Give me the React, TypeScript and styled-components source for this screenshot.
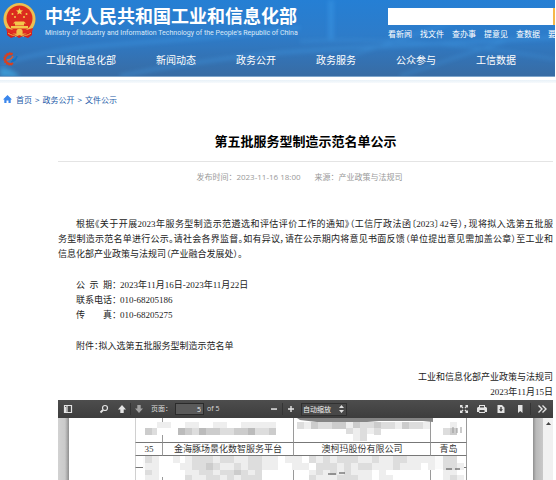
import React from 'react';
import styled, { createGlobalStyle } from 'styled-components';

const latin = '"Open Sans", "Noto Sans CJK SC", sans-serif';
const cjk = '"Noto Sans CJK SC", sans-serif';
const song = '"Liberation Serif", "Noto Sans CJK SC", serif';

const Global = createGlobalStyle`
  * { box-sizing: border-box; }
  body { margin: 0; background: #fff; font-family: ${cjk}; }
  a { color: inherit; text-decoration: none; }
  p, h1 { margin: 0; padding: 0; }
`;

const Page = styled.div`
  height: 100vh;
  display: flex;
  flex-direction: column;
  overflow: hidden;
`;

const Header = styled.header`
  position: relative;
  flex: none;
  margin-right: 1px;
  overflow: hidden;
  color: #fff;
  background: linear-gradient(#257fd4, #2d7cca 45%, #3472b3 78%, #386ca4);
  border-bottom: 1px solid #7fa6cc;
`;

const Backdrop = styled.svg`
  position: absolute;
  inset: 0;
  width: 100%;
  height: 100%;
`;

const Masthead = styled.div`
  position: relative;
  display: flex;
  align-items: flex-start;
  height: 42px;
  padding: 3px 0 0 3px;
`;

const Brand = styled.a`
  display: flex;
  gap: 9px;
  flex: 0 0 300px;
`;

const BrandText = styled.span`
  display: flex;
  flex-direction: column;
  white-space: nowrap;
`;

const BrandName = styled.span`
  font: 700 18px/25px ${cjk};
`;

const BrandLatin = styled.span`
  font: 400 7px/10px Roboto, sans-serif;
  color: #dbe9f7;
`;

const Search = styled.form`
  flex: 1;
  min-width: 0;
  margin: 5px 0 0 85px;
`;

const SearchBar = styled.div`
  display: flex;
  height: 17px;
`;

const SearchInput = styled.input`
  flex: 1;
  min-width: 0;
  border: 0;
  padding: 0 4px;
  background: #fff;
  font: 10px ${cjk};
`;

const SearchButton = styled.button`
  width: 2px;
  padding: 0;
  border: 0;
  background: #f5b84a;
`;

const QuickLinks = styled.div`
  display: flex;
  gap: 8px;
  font-size: 8px;
  line-height: 18px;
  white-space: nowrap;
`;

const Nav = styled.nav`
  position: relative;
  display: flex;
  align-items: center;
  gap: 40px;
  height: 34px;
  padding-left: 2px;
  font-size: 10px;
  white-space: nowrap;
`;

const NavLogo = styled.svg`
  flex: none;
  width: 16px;
  height: 14px;
  margin-right: -12px;
`;

const Band = styled.div`
  flex: none;
  height: 3px;
  margin-top: 3px;
  background: linear-gradient(#e8f1f8, #f7fafc);
`;

const Crumbs = styled.nav`
  flex: none;
  display: flex;
  align-items: center;
  gap: 3px;
  height: 32px;
  padding-left: 3px;
  color: #1a5aa8;
  font-size: 8px;
`;

const HomeIcon = styled.svg`
  width: 9px;
  height: 8px;
  margin-right: 1px;
`;

const Article = styled.article`
  flex: 1;
  min-height: 0;
  display: flex;
  flex-direction: column;
  padding: 16px 3px 0 58px;
`;

const Title = styled.h1`
  padding-bottom: 10px;
  border-bottom: 1px solid #e4e4e4;
  text-align: center;
  font: 700 13px/20px ${cjk};
  color: #000;
`;

const Meta = styled.p`
  display: flex;
  justify-content: center;
  gap: 14px;
  padding: 7px 12px 33px 0;
  font: 8px/15px ${latin};
  color: #999;
`;

const Body = styled.div`
  display: flex;
  flex-direction: column;
  gap: 16px;
  color: #222;
  font: 9px/15px ${song};
  white-space: nowrap;
`;

const Para = styled.p<{ $indent?: boolean }>`
  padding-left: ${p => (p.$indent ? '18px' : '0')};
  font-feature-settings: 'palt';
`;

const Line = styled.span<{ $first?: boolean; $last?: boolean }>`
  display: block;
  padding-left: ${p => (p.$first ? '18px' : '0')};
  text-align-last: ${p => (p.$last ? 'left' : 'justify')};
`;

const Contact = styled.dl`
  display: grid;
  grid-template-columns: 44px 1fr;
  margin: 0;
  padding-left: 18px;
`;

const Term = styled.dt`
  white-space: pre;
  font-feature-settings: 'palt';
`;

const Detail = styled.dd`
  margin: 0;
`;

const Signature = styled.p`
  text-align: right;
`;

const Viewer = styled.section`
  flex: 1;
  min-height: 0;
  display: flex;
  flex-direction: column;
`;

const Toolbar = styled.div`
  flex: none;
  display: flex;
  align-items: center;
  height: 18px;
  padding: 0 6px 0 5px;
  background: linear-gradient(#4d4d4d, #3d3d3d);
  color: #ddd;
  font: 7px/10px ${latin};
`;

const Tool = styled.button<{ $gap: number; $dim?: boolean }>`
  display: flex;
  padding: 0;
  border: 0;
  margin-left: ${p => p.$gap}px;
  background: none;
  color: ${p => (p.$dim ? '#a2a2a2' : '#e4e4e4')};
`;

const Glyph = styled.svg`
  width: 10px;
  height: 10px;
`;

const Divider = styled.span<{ $gap: number }>`
  width: 1px;
  height: 12px;
  margin-left: ${p => p.$gap}px;
  background: #343434;
`;

const PageLabel = styled.label`
  width: 24px;
  margin-left: 7px;
  white-space: nowrap;
`;

const PageInput = styled.input`
  width: 29px;
  height: 12px;
  padding: 0 2px;
  border: 1px solid #2a2a2a;
  background: #5a5a5a;
  color: #eee;
  text-align: right;
  font: inherit;
`;

const PageCount = styled.span`
  width: 62px;
  margin-left: 3px;
`;

const ZoomBox = styled.span`
  display: flex;
  align-items: center;
  width: 46px;
  height: 13px;
  margin-left: 5px;
  padding-right: 2px;
  border: 1px solid #303030;
  background: #484848;
`;

const ZoomSelect = styled.select`
  flex: 1;
  min-width: 0;
  appearance: none;
  border: 0;
  padding: 0 0 0 1px;
  background: none;
  color: #f2f2f2;
  font: 7px/10px ${cjk};
`;

const ZoomArrows = styled.svg`
  width: 5px;
  height: 8px;
`;

const Spacer = styled.span`
  flex: 1;
`;

const Canvas = styled.div`
  flex: 1;
  min-height: 0;
  display: flex;
  overflow: hidden;
`;

const Gutter = styled.div<{ $right?: boolean }>`
  flex: none;
  width: ${p => (p.$right ? 10 : 11)}px;
  background: ${p =>
    p.$right
      ? 'linear-gradient(90deg, #8f8f8f, #b9b9b9 3px, #c9c9c9)'
      : 'linear-gradient(90deg, #d2d2d2, #cacaca 7px, #8f8f8f)'};
`;

const Sheet = styled.div`
  position: relative;
  flex: 1;
  padding-left: 66px;
  background: #fff;
`;

const Scrollbar = styled.div`
  display: flex;
  flex: none;
  justify-content: center;
  width: 10px;
  padding-top: 4px;
  background: #f1f1f1;
`;

const Listing = styled.table`
  table-layout: fixed;
  width: 332px;
  border-spacing: 0;
  font: 9px/11px ${song};
  color: #333;
`;

const Cell = styled.td<{ $height: number }>`
  height: ${p => p.$height}px;
  padding: 0;
  border-right: 1px solid #9a9a9a;
  border-bottom: 1px solid #777;
  text-align: center;
  &:first-child {
    border-left: 1px solid #d0d0d0;
  }
`;

const Mosaic = styled.svg`
  position: absolute;
  left: 0;
  top: 0;
  width: 464px;
  height: 62px;
`;

const NAV = ['工业和信息化部', '新闻动态', '政务公开', '政务服务', '公众参与', '工信数据'];
const QUICK = ['看新闻', '找文件', '查办事', '提意见', '查数据', '要'];

/* Each strip is a run of 7px tiles: left, top, and one hex digit of grey per tile. */
const STRIPS: [number, number, string][] = [
  [76, 4, 'ff'], [88, 4, 'ee'], [116, 4, 'eeffeeffeeeee'],
  [76, 10, 'cd'], [88, 10, 'ff'], [109, 10, 'bcdbccddccbddc'],
  [228, 4, 'decddccecddcddecdde'],
  [277, 10, 'deded'], [277, 16, 'fedf'],
  [374, 4, 'fe'], [374, 10, 'dc'],
  [76, 38, 'deffefeeefefeeefeeefeefe'],
  [76, 45, 'eefffeeeddedededeeeffefee'],
  [116, 38, 'edddeddeedd'], [116, 45, 'eddcdeededd'],
  [116, 52, 'eeddeddcded'], [116, 57, 'deeddededdd'],
  [76, 52, 'de'], [76, 57, 'ee'], [90, 52, 'f'],
  [226, 38, 'efdededddeedeeddeeee'], [226, 45, 'eefdddededdeeedeeefe'],
  [240, 52, 'edededeeefef'], [240, 57, 'deeedddeefee'],
  [374, 38, 'ddf'], [374, 45, 'dde'], [374, 52, 'eef'], [374, 57, 'ede'],
];

function Emblem() {
  return (
    <svg width="33" height="36" viewBox="0 0 33 36" aria-hidden="true">
      <path d="M4 23 L4 32 L8 35 L13 33 L16 35 L20 33 L25 35 L29 32 L29 23Z" fill="#d81f1c" />
      <circle cx="16.5" cy="16" r="16" fill="#edbf50" />
      <circle cx="16.5" cy="15.500" r="13" fill="#dc2b1e" />
      <path d="M16.500 5l1 2.300 2.500.2-1.900 1.600.6 2.500-2.200-1.400-2.200 1.400.6-2.500L13 7.500l2.500-.2z" fill="#f6d251" />
      <g fill="#f3c84c">
        <circle cx="9.500" cy="11" r="1" /><circle cx="12" cy="14" r="1" />
        <circle cx="21" cy="14" r="1" /><circle cx="23.500" cy="11" r="1" />
        <path d="M12 18.500h9l2 2H10zM12 20.500h9v2h-9zM8 23h17v2.500H8z" />
      </g>
      <path d="M3 25q13.500 5 27 0l-1 4q-12.500 4-25 0z" fill="#e02a20" />
      <circle cx="16.500" cy="29" r="3.200" fill="#f0c048" />
      <path d="M5 30q5 4 9 1M28 30q-5 4-9 1M12 33.500l4.500-2 4.500 2" stroke="#efb945" strokeWidth="1" fill="none" />
    </svg>
  );
}

const ICONS: Record<string, React.ReactNode> = {
  侧边栏: <path d="M1.500 1.500h7v7h-7zM4 1.500v7M2.500 3v5" fill="none" stroke="currentColor" strokeWidth="1.200" />,
  查找: <g fill="none" stroke="currentColor"><circle cx="6" cy="4" r="2.500" strokeWidth="1.200" /><path d="M4 6L1.500 8.500" strokeWidth="1.800" /></g>,
  上一页: <path d="M5 1l4 4.500H6.700V9H3.300V5.500H1z" fill="currentColor" />,
  下一页: <path d="M5 9l4-4.500H6.700V1H3.300v3.500H1z" fill="currentColor" />,
  缩小: <path d="M2 4.300h6v1.500H2z" fill="currentColor" />,
  放大: <path d="M2 4.300h2.300V2h1.400v2.300H8v1.400H5.700V8H4.300V5.700H2z" fill="currentColor" />,
  全屏: <path d="M1 4V1h3L3 2l1.500 1.500-1 1L2 3zM9 4V1H6l1 1-1.500 1.500 1 1L8 3zM1 6v3h3L3 8l1.500-1.500-1-1L2 7zM9 6v3H6l1-1-1.500-1.500 1-1L8 7z" fill="currentColor" />,
  打印: <path fillRule="evenodd" d="M2 3V1h6v2h1l1 1v4H8v1H2V8H0V4l1-1zM3 2v1.500h4V2zM2.500 6v2h5V6z" fill="currentColor" />,
  下载: <path fillRule="evenodd" d="M1.500 1h4.500l2.500 2.500V9h-7zM4.300 3v2.300H3L5 7.700l2-2.400H5.700V3z" fill="currentColor" />,
  书签: <path d="M3 1h4.500v8L5.250 7 3 9z" fill="currentColor" />,
  更多: <path d="M1.500 1.500L5 5 1.500 8.500M5.500 1.500L9 5 5.500 8.500" fill="none" stroke="currentColor" strokeWidth="1.400" />,
};

function ToolButton({ name, gap = 0, dim }: { name: string; gap?: number; dim?: boolean }) {
  return (
    <Tool type="button" aria-label={name} $gap={gap} $dim={dim}>
      <Glyph viewBox="0 0 10 10" aria-hidden="true">{ICONS[name]}</Glyph>
    </Tool>
  );
}

function SiteHeader() {
  return (
    <Header>
      <Backdrop viewBox="0 0 555 77" preserveAspectRatio="none" aria-hidden="true">
        <defs>
          <filter id="soft"><feGaussianBlur stdDeviation="2" /></filter>
        </defs>
        <g filter="url(#soft)" fill="none" stroke="#45a3ee" opacity=".4">
          <path d="M0 66Q40 50 130 44T300 28" strokeWidth="3" />
          <path d="M120 77Q220 56 330 50T555 38" strokeWidth="3" />
          <path d="M300 42Q420 36 555 60M340 60L460 20M400 77L510 40" strokeWidth="2" />
          <path d="M331 0v40" strokeWidth="5" />
        </g>
        <path d="M0 68Q14 70 20 78H0z" fill="#3fb4f0" opacity=".6" filter="url(#soft)" />
      </Backdrop>
      <Masthead>
        <Brand href="#">
          <Emblem />
          <BrandText>
            <BrandName>中华人民共和国工业和信息化部</BrandName>
            <BrandLatin>Ministry of Industry and Information Technology of the People's Republic of China</BrandLatin>
          </BrandText>
        </Brand>
        <Search>
          <SearchBar>
            <SearchInput aria-label="搜索" />
            <SearchButton type="button" aria-label="搜索" />
          </SearchBar>
          <QuickLinks>{QUICK.map(q => <a href="#" key={q}>{q}</a>)}</QuickLinks>
        </Search>
      </Masthead>
      <Nav>
        <NavLogo viewBox="0 0 16 14" aria-hidden="true">
          <path d="M10.500 2.500A5 5 0 1 0 11 11" fill="none" stroke="#d9401f" strokeWidth="2.200" />
          <path d="M10.500 1.500A6 6 0 1 0 11 12" fill="none" stroke="#d9401f" strokeWidth="1.500" strokeDasharray="1 1.500" />
          <path d="M5 8q4 0 6-4" fill="none" stroke="#e25a2a" strokeWidth="1.500" />
          <path d="M10 8q4 0 5-4M9 10q4-1 5-3" fill="none" stroke="#1672c4" strokeWidth="1.500" />
        </NavLogo>
        {NAV.map(n => <a href="#" key={n}>{n}</a>)}
      </Nav>
    </Header>
  );
}

function PdfViewer() {
  return (
    <Viewer>
      <Toolbar>
        <ToolButton name="侧边栏" />
        <ToolButton name="查找" gap={26} />
        <ToolButton name="上一页" gap={8} />
        <Divider $gap={3} />
        <ToolButton name="下一页" gap={3} dim />
        <PageLabel htmlFor="page">页面：</PageLabel>
        <PageInput id="page" defaultValue="5" />
        <PageCount>of 5</PageCount>
        <ToolButton name="缩小" />
        <Divider $gap={3} />
        <ToolButton name="放大" gap={3} />
        <ZoomBox>
          <ZoomSelect aria-label="缩放"><option>自动缩放</option></ZoomSelect>
          <ZoomArrows viewBox="0 0 5 8" aria-hidden="true">
            <path d="M2.500 0L5 3H0zM2.500 8L0 5h5z" fill="#ddd" />
          </ZoomArrows>
        </ZoomBox>
        <Spacer />
        <ToolButton name="全屏" />
        <ToolButton name="打印" gap={8} />
        <ToolButton name="下载" gap={9} />
        <ToolButton name="书签" gap={9} />
        <Divider $gap={5} />
        <ToolButton name="更多" gap={6} />
      </Toolbar>
      <Canvas>
        <Gutter />
        <Sheet>
          <Listing>
            <colgroup><col width="28" /><col width="131" /><col width="137" /><col width="36" /></colgroup>
            <tbody>
              <tr>{[0, 1, 2, 3].map(i => <Cell key={i} $height={25} />)}</tr>
              <tr>
                <Cell $height={13}>35</Cell>
                <Cell $height={13}>金海豚场景化数智服务平台</Cell>
                <Cell $height={13}>澳柯玛股份有限公司</Cell>
                <Cell $height={13}>青岛</Cell>
              </tr>
              <tr>{[0, 1, 2, 3].map(i => <Cell key={i} $height={12} />)}</tr>
              <tr>{[0, 1, 2, 3].map(i => <Cell key={i} $height={20} />)}</tr>
            </tbody>
          </Listing>
          <Mosaic viewBox="0 0 464 62" aria-hidden="true">
            <path d="M74 38.500h314V51H74z" fill="#fafafa" />
            {STRIPS.map(([x, y, tones]) =>
              [...tones].map((t, i) => (
                <rect key={`${x}-${y}-${i}`} x={x + i * 7} y={y} width="7" height="7" fill={`#${t}${t}${t}`} />
              )),
            )}
            <path d="M228 0h136v4l-10-1H310l-12 1h-50l-17-2z" fill="#858585" />
            <path d="M259 56h8M270 55h6M377 51h6M386 51h5" stroke="#444" strokeWidth="1" />
            <path d="M384 9v6M388 10v5M392 9v6" stroke="#999" strokeWidth="1" />
          </Mosaic>
        </Sheet>
        <Gutter $right />
        <Scrollbar>
          <svg width="5" height="3" viewBox="0 0 5 3" aria-hidden="true"><path d="M0 3L2.500 0 5 3z" fill="#444" /></svg>
        </Scrollbar>
      </Canvas>
    </Viewer>
  );
}

export default function App() {
  return (
    <Page>
      <Global />
      <SiteHeader />
      <Band />
      <Crumbs>
        <HomeIcon viewBox="0 0 9 8" aria-hidden="true">
          <path d="M4.500 0L9 4.500H7.700V8H5.500V5.500h-2V8H1.300V4.500H0z" fill="#3a86ec" />
        </HomeIcon>
        <a href="#">首页</a>
        <span>&gt;</span>
        <a href="#">政务公开</a>
        <span>&gt;</span>
        <a href="#">文件公示</a>
      </Crumbs>
      <Article>
        <Title>第五批服务型制造示范名单公示</Title>
        <Meta>
          <span>发布时间：2023-11-16 18:00</span>
          <span>来源：产业政策与法规司</span>
        </Meta>
        <Body>
          <Para>
            <Line $first>根据《关于开展2023年服务型制造示范遴选和评估评价工作的通知》（工信厅政法函〔2023〕42号），现将拟入选第五批服</Line>
            <Line>务型制造示范名单进行公示。请社会各界监督。如有异议，请在公示期内将意见书面反馈（单位提出意见需加盖公章）至工业和</Line>
            <Line $last>信息化部产业政策与法规司（产业融合发展处）。</Line>
          </Para>
          <Contact>
            <Term>公  示  期：</Term>
            <Detail>2023年11月16日-2023年11月22日</Detail>
            <Term>联系电话：</Term>
            <Detail>010-68205186</Detail>
            <Term>传　　真：</Term>
            <Detail>010-68205275</Detail>
          </Contact>
          <Para $indent>附件：拟入选第五批服务型制造示范名单</Para>
          <Signature>
            工业和信息化部产业政策与法规司<br />2023年11月15日
          </Signature>
        </Body>
        <PdfViewer />
      </Article>
    </Page>
  );
}
